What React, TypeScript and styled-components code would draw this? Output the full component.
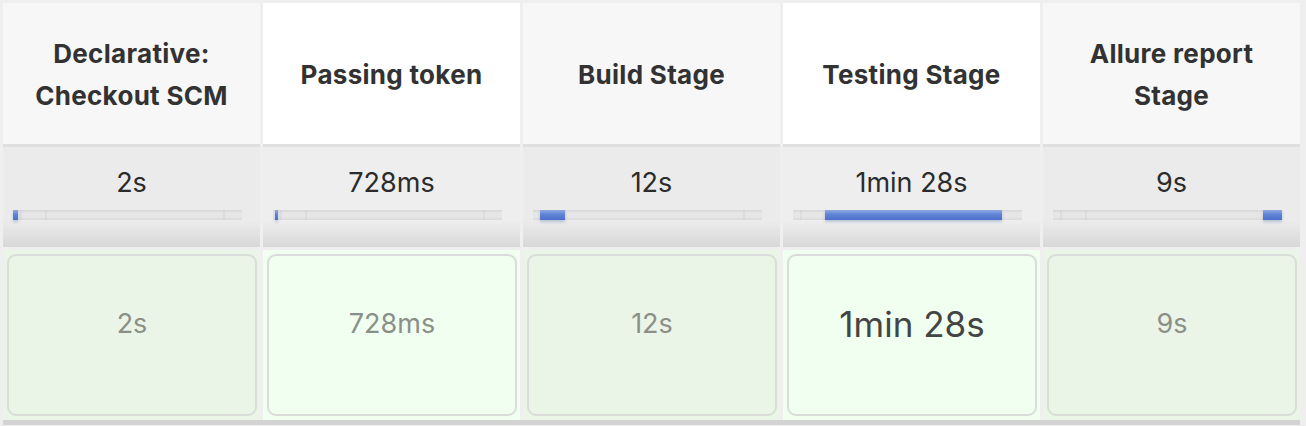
import React from "react";
import styled, { createGlobalStyle } from "styled-components";

const GlobalStyle = createGlobalStyle`
  html, body { margin: 0; padding: 0; background: #ededed; }
  body { font-family: Inter, "Noto Sans", "Liberation Sans", sans-serif; }
`;

type Stage = {
  name: string;
  time: string;
  fill: [number, number];
  big?: boolean;
};

const BAR_WIDTH = 229;
const BOUNDS = [7, 32, 210];

const stages: Stage[] = [
  { name: "Declarative: Checkout SCM", time: "2s", fill: [0, 5] },
  { name: "Passing token", time: "728ms", fill: [2, 5] },
  { name: "Build Stage", time: "12s", fill: [7, 32] },
  { name: "Testing Stage", time: "1min 28s", fill: [32, 209], big: true },
  { name: "Allure report Stage", time: "9s", fill: [210, 229] },
];

const Wrapper = styled.div`
  width: 1306px;
  height: 426px;
  overflow: hidden;
  background: #efefef;
  box-sizing: border-box;
  padding: 3px 6px 0 3px;
  display: flex;
  flex-direction: column;
`;

const Columns = styled.div`
  display: flex;
  gap: 3px;
  border-bottom: 5px solid #d3d3d3;
`;

const Column = styled.div`
  width: 257px;
  display: flex;
  flex-direction: column;
`;

const Header = styled.div<{ $alt: boolean }>`
  height: 141px;
  box-sizing: border-box;
  padding: 3px 14px 0;
  display: flex;
  align-items: center;
  justify-content: center;
  text-align: center;
  background: ${(p) => (p.$alt ? "#ffffff" : "#f7f7f7")};
  color: #323232;
  font-size: 26px;
  font-weight: 700;
  letter-spacing: 0.3px;
  line-height: 42px;
`;

const Duration = styled.div<{ $alt: boolean }>`
  height: 103px;
  box-sizing: border-box;
  border-top: 3px solid #dfdfdf;
  padding-top: 21px;
  display: flex;
  flex-direction: column;
  align-items: center;
  background: linear-gradient(
    to bottom,
    ${(p) => (p.$alt ? "#eeeeee" : "#ebebeb")} 0%,
    ${(p) => (p.$alt ? "#eeeeee" : "#ebebeb")} 74%,
    #d8d8d8 100%
  );
`;

const DurationText = styled.div`
  font-size: 27px;
  line-height: 30px;
  color: #2b2b2b;
  font-weight: 400;
`;

const Track = styled.div`
  position: relative;
  align-self: flex-start;
  margin: 12px 0 0 10px;
  width: ${BAR_WIDTH}px;
  height: 10px;
  background: linear-gradient(to bottom, #d6d6d6 0%, #e6e6e6 30%, #e6e6e6 70%, #d9d9d9 100%);
`;

const Mark = styled.span`
  position: absolute;
  top: 0;
  bottom: 0;
  width: 2px;
  background: rgba(0, 0, 0, 0.03);
`;

const Fill = styled.span`
  position: absolute;
  top: 0;
  bottom: 0;
  background: linear-gradient(to bottom, #90a9e4 0%, #5f83d6 45%, #4c70c9 100%);
  box-shadow: 0 2px 3px rgba(40, 70, 150, 0.25);
`;

const CellOuter = styled.div<{ $alt: boolean }>`
  margin-top: 3px;
  height: 170px;
  box-sizing: border-box;
  padding: 4px 3px 3px 4px;
  background: ${(p) => (p.$alt ? "#f0fff0" : "#eaf5e7")};
`;

const Card = styled.div<{ $alt: boolean; $big: boolean }>`
  height: 162px;
  box-sizing: border-box;
  border: 2px solid #d9dcd8;
  border-radius: 9px;
  background: ${(p) => (p.$alt ? "#f0fff0" : "#eaf5e7")};
  padding-top: 49px;
  display: flex;
  justify-content: center;
  font-size: ${(p) => (p.$big ? "35px" : "27px")};
  line-height: 38px;
  color: ${(p) => (p.$big ? "#444444" : "#8a9088")};
`;

function ProgressBar({ fill }: { fill: [number, number] }) {
  return (
    <Track>
      {BOUNDS.filter((b) => b < fill[0] - 1 || b > fill[1] + 1).map((b) => (
        <Mark key={b} style={{ left: b }} />
      ))}
      <Fill style={{ left: fill[0], width: fill[1] - fill[0] }} />
    </Track>
  );
}

export default function App() {
  return (
    <>
      <GlobalStyle />
      <Wrapper>
        <Columns>
          {stages.map((s, i) => {
            const alt = i % 2 === 1;
            return (
              <Column key={s.name}>
                <Header $alt={alt}>{s.name}</Header>
                <Duration $alt={alt}>
                  <DurationText>{s.time}</DurationText>
                  <ProgressBar fill={s.fill} />
                </Duration>
                <CellOuter $alt={alt}>
                  <Card $alt={alt} $big={!!s.big}>
                    {s.time}
                  </Card>
                </CellOuter>
              </Column>
            );
          })}
        </Columns>
      </Wrapper>
    </>
  );
}
